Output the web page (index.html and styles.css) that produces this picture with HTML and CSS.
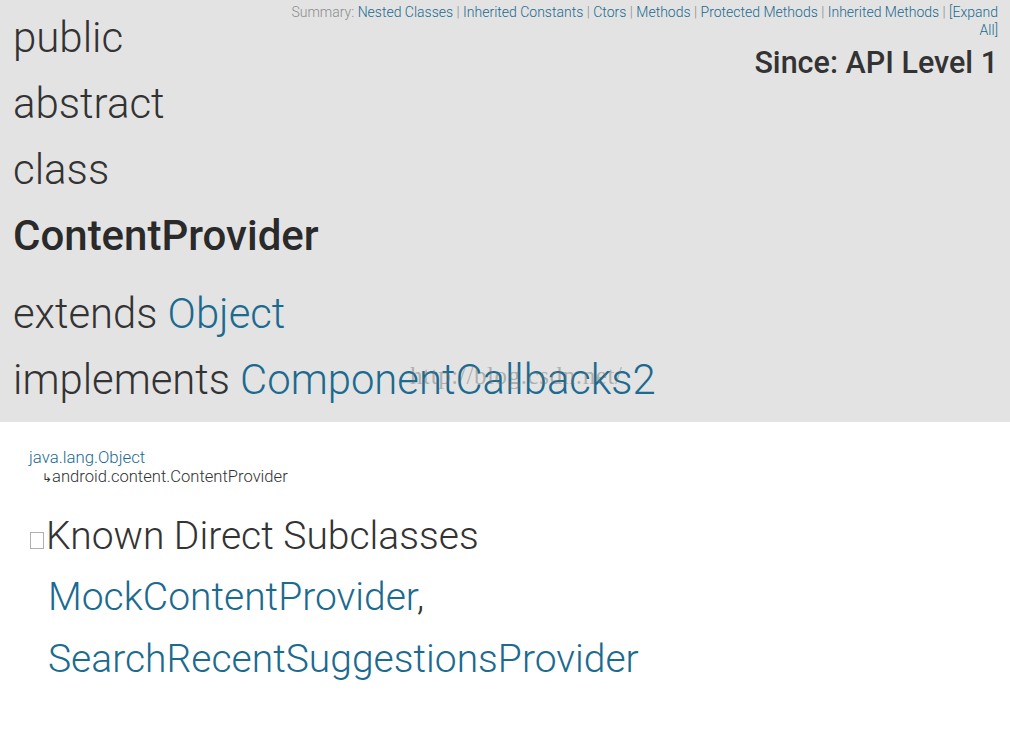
FILE: index.html
```html
<!DOCTYPE html>
<html lang="en">
<head>
  <meta charset="UTF-8">
  <title>ContentProvider</title>
  <link rel="stylesheet" href="styles.css">
</head>
<body>
  <div class="header">
    <div class="meta">
      <div class="summary">
        <span class="label">Summary:</span>
        <a href="#">Nested Classes</a> <span class="sep">|</span>
        <a href="#">Inherited Constants</a> <span class="sep">|</span>
        <a href="#">Ctors</a> <span class="sep">|</span>
        <a href="#">Methods</a> <span class="sep">|</span>
        <a href="#">Protected Methods</a> <span class="sep">|</span>
        <a href="#">Inherited Methods</a> <span class="sep">|</span>
        <a href="#">[Expand All]</a>
      </div>
      <div class="since">Since: API Level 1</div>
    </div>
    <h1 class="title">
      <span class="word">public</span>
      <span class="word">abstract</span>
      <span class="word">class</span>
      <span class="word name">ContentProvider</span>
    </h1>
    <p class="inherit first">extends <a href="#">Object</a></p>
    <p class="inherit">implements <a href="#">ComponentCallbacks2</a></p>
    <div class="watermark">http://blog.csdn.net/</div>
  </div>

  <div class="content">
    <div class="tree">
      <div class="tree-root"><a href="#">java.lang.Object</a></div>
      <div class="tree-child"><span class="arrow">↳</span>android.content.ContentProvider</div>
    </div>
    <h2 class="subclasses"><span class="toggle"></span>Known Direct Subclasses</h2>
    <div class="sub-list">
      <div><a href="#">MockContentProvider</a>,</div>
      <div><a href="#">SearchRecentSuggestionsProvider</a></div>
    </div>
  </div>
</body>
</html>
```

FILE: styles.css
```css
* {
  box-sizing: border-box;
}
body {
  margin: 0;
  padding: 0;
  background: #fff;
  color: #333;
  font-family: Roboto, 'Noto Sans', sans-serif;
}
a {
  color: #1b6a8f;
  text-decoration: none;
}
.header {
  position: relative;
  background: #e3e3e3;
  padding: 5px 12px 9px 13px;
  overflow: hidden;
}
.meta {
  float: right;
  width: 708px;
  text-align: right;
  margin-top: -2px;
}
.summary {
  font-size: 14px;
  font-weight: 300;
  line-height: 18px;
}
.summary .label,
.summary .sep {
  color: #8c8c8c;
}
.since {
  margin-top: 6px;
  font-size: 30.5px;
  line-height: 36px;
  font-weight: 500;
  color: #333;
}
.title {
  margin: 0;
  font-size: 42px;
  font-weight: 300;
  line-height: 66px;
}
.title .word {
  display: block;
}
.title .name {
  font-weight: 500;
  color: #2a2a2a;
}
.inherit {
  margin: 0;
  font-size: 41.8px;
  font-weight: 300;
  line-height: 66px;
  clear: both;
}
.inherit.first {
  margin-top: 12px;
}
.watermark {
  position: absolute;
  left: 410px;
  top: 362px;
  font-family: 'Liberation Serif', serif;
  font-size: 25px;
  color: rgba(110, 110, 110, 0.45);
  letter-spacing: 0.6px;
}
.content {
  padding: 26px 0 0 29px;
}
.tree {
  font-size: 17px;
  font-weight: 300;
  line-height: 19px;
}
.tree-root {
  font-size: 16.8px;
}
.tree-child {
  padding-left: 13px;
  font-size: 16.6px;
  color: #333;
}
.tree-child .arrow {
  font-size: 12px;
}
.subclasses {
  margin: 22px 0 0;
  font-size: 39px;
  font-weight: 300;
  line-height: 52px;
  display: flex;
}
.toggle {
  width: 14px;
  height: 17px;
  border: 1px solid #b0b0b0;
  margin: 22px 2px 0 1px;
}
.sub-list {
  padding-left: 19px;
  font-size: 39px;
  font-weight: 300;
  line-height: 62px;
  margin-top: 4px;
}
```
